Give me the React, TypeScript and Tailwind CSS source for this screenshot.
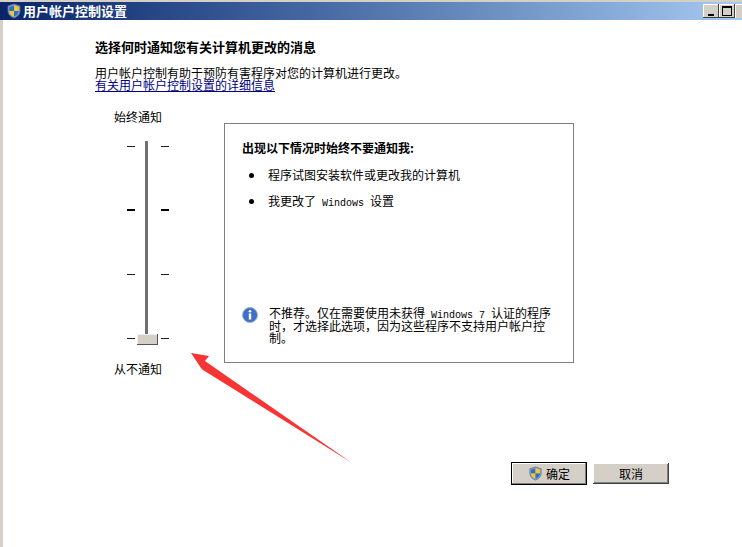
const cjk = "font-['Noto_Sans_CJK_SC','Liberation_Sans',sans-serif]";

function Shield({ size }: { size: number }) {
  return (
    <svg width={size} height={size} viewBox="0 0 16 16" className="shrink-0">
      <path d="M8 1 L14 3 V8 C14 11.5 11 14 8 15 C5 14 2 11.5 2 8 V3 Z" fill="#8fa6c4" stroke="#5a6f92" strokeWidth="0.8" />
      <path d="M8 2.5 L3.2 4 V8 H8 Z" fill="#2f6fc4" />
      <path d="M8 2.5 L12.8 4 V8 H8 Z" fill="#f2c832" />
      <path d="M3.2 8 H8 V13.6 C5.5 12.6 3.6 10.6 3.2 8 Z" fill="#f2c832" />
      <path d="M12.8 8 H8 V13.6 C10.5 12.6 12.4 10.6 12.8 8 Z" fill="#2f6fc4" />
    </svg>
  );
}

function Win({ children }: { children: string }) {
  return <span className="whitespace-pre-wrap font-['Liberation_Mono',monospace] text-[10px] leading-[0px]">{children}</span>;
}

function TickRow({ bold }: { bold?: boolean }) {
  const cls = bold ? "h-[2px] w-[8px] bg-black" : "h-px w-[8px] bg-[#222]";
  return (
    <div className="flex h-[2px] items-center justify-between">
      <div className={cls} />
      <div className={cls} />
    </div>
  );
}

function Bullet({ children }: { children: React.ReactNode }) {
  return (
    <div className="flex h-[26px] items-center">
      <div className="ml-[7px] mr-[14px] h-[5px] w-[5px] rounded-full bg-black" />
      <div>{children}</div>
    </div>
  );
}

function WinButton({ children, primary }: { children: React.ReactNode; primary?: boolean }) {
  return (
    <button
      className={
        "flex w-[76px] items-center justify-center gap-[3px] bg-[#d4d0c8] text-[12px] text-black " +
        (primary
          ? "h-[23px] border border-black shadow-[inset_-1px_-1px_0_#808080,inset_1px_1px_0_#fff]"
          : "h-[21px] shadow-[inset_-1px_-1px_0_#404040,inset_1px_1px_0_#fff,inset_-2px_-2px_0_#808080]")
      }
    >
      {children}
    </button>
  );
}

export default function App() {
  return (
    <div className={`relative flex h-[547px] w-[742px] flex-col overflow-hidden bg-white text-black ${cjk}`}>
      <div className="h-[2px] bg-[#d4d0c8]" />
      <div className="flex h-[18px] items-center justify-between bg-gradient-to-r from-[#0a246a] to-[#a6caf0] pl-[6px]">
        <div className="flex items-center gap-[1px] text-[13px] font-bold leading-none text-white">
          <Shield size={16} />
          <span className="-translate-y-px">用户帐户控制设置</span>
        </div>
        <div className="flex h-[14px] w-[39px] gap-0 overflow-hidden">
          <div className="flex h-[14px] w-[16px] shrink-0 items-end justify-center bg-[#d4d0c8] pb-[2px] shadow-[inset_-1px_-1px_0_#404040,inset_1px_1px_0_#fff]">
            <div className="h-[2px] w-[6px] bg-black" />
          </div>
          <div className="flex h-[14px] w-[16px] shrink-0 items-center justify-center bg-[#d4d0c8] shadow-[inset_-1px_-1px_0_#404040,inset_1px_1px_0_#fff]">
            <div className="h-[10px] w-[10px] border border-t-2 border-black" />
          </div>
          <div className="h-[14px] w-[16px] shrink-0 bg-[#d4d0c8] shadow-[inset_1px_1px_0_#fff]" />
        </div>
      </div>

      <div className="flex flex-1 border-l-[3px] border-[#d4d0c8]">
        <div className="flex flex-1 flex-col pl-[92px] pt-[18px]">
          <div className="text-[13px] font-bold leading-[18px]">选择何时通知您有关计算机更改的消息</div>
          <div className="mt-[11px] text-[12px] leading-[12px]">用户帐户控制有助于预防有害程序对您的计算机进行更改。</div>
          <a className="text-[12px] leading-[12px] text-[#000080] underline">有关用户帐户控制设置的详细信息</a>

          <div className="mt-[7px] flex">
            <div className="ml-[19px] flex w-[110px] flex-col">
              <div className="mt-[12px] text-[12px] leading-[14px]">始终通知</div>
              <div className="relative ml-[13px] mt-[17px] w-[42px]">
                <div className="absolute left-[18px] top-0 h-[196px] w-[3px] bg-[#707070]" />
                <div className="flex h-[198px] flex-col justify-between pt-[4px]">
                  <TickRow />
                  <TickRow bold />
                  <TickRow />
                  <TickRow />
                </div>
                <div className="absolute left-[10px] top-[193px] h-[11px] w-[21px] bg-[#d4d0c8] shadow-[inset_-1px_-1px_0_#555,inset_1px_1px_0_#eee]" />
              </div>
              <div className="mt-[23px] text-[12px] leading-[14px]">从不通知</div>
            </div>

            <div className="mt-[25px] flex h-[240px] w-[350px] flex-col border border-[#808080] bg-white pl-[17px] pr-[18px] pt-[16px]">
              <div className="text-[12px] font-bold leading-[16px]">出现以下情况时始终不要通知我:</div>
              <div className="mt-[6px] text-[12px] leading-none">
                <Bullet>程序试图安装软件或更改我的计算机</Bullet>
                <Bullet>
                  我更改了<Win>{" Windows "}</Win>设置
                </Bullet>
              </div>
              <div className="mt-[93px] flex">
                <svg width="16" height="16" viewBox="0 0 16 16" className="mr-[11px] shrink-0">
                  <circle cx="8" cy="8" r="7.5" fill="#3f6fc6" stroke="#9ab0d8" />
                  <circle cx="8" cy="4.2" r="1.3" fill="#fff" />
                  <rect x="6.8" y="6.5" width="2.4" height="6" fill="#fff" />
                </svg>
                <div className="text-[12px] leading-[12.5px]">
                  不推荐。仅在需要使用未获得<Win>{" Windows 7 "}</Win>认证的程序{"时\uFF0C才选择此选项\uFF0C因为这些程序不支持用户帐户控制。"}
                </div>
              </div>
            </div>
          </div>

          <div className="ml-[416px] mt-[86px] flex items-center gap-[6px]">
            <WinButton primary>
              <Shield size={15} />
              确定
            </WinButton>
            <WinButton>取消</WinButton>
          </div>
        </div>
      </div>

      <svg width="742" height="547" className="pointer-events-none absolute left-0 top-0">
        <polygon points="191,353 209,356 205,361 352,463 203,370 201,368" fill="#f83535" />
      </svg>
    </div>
  );
}
